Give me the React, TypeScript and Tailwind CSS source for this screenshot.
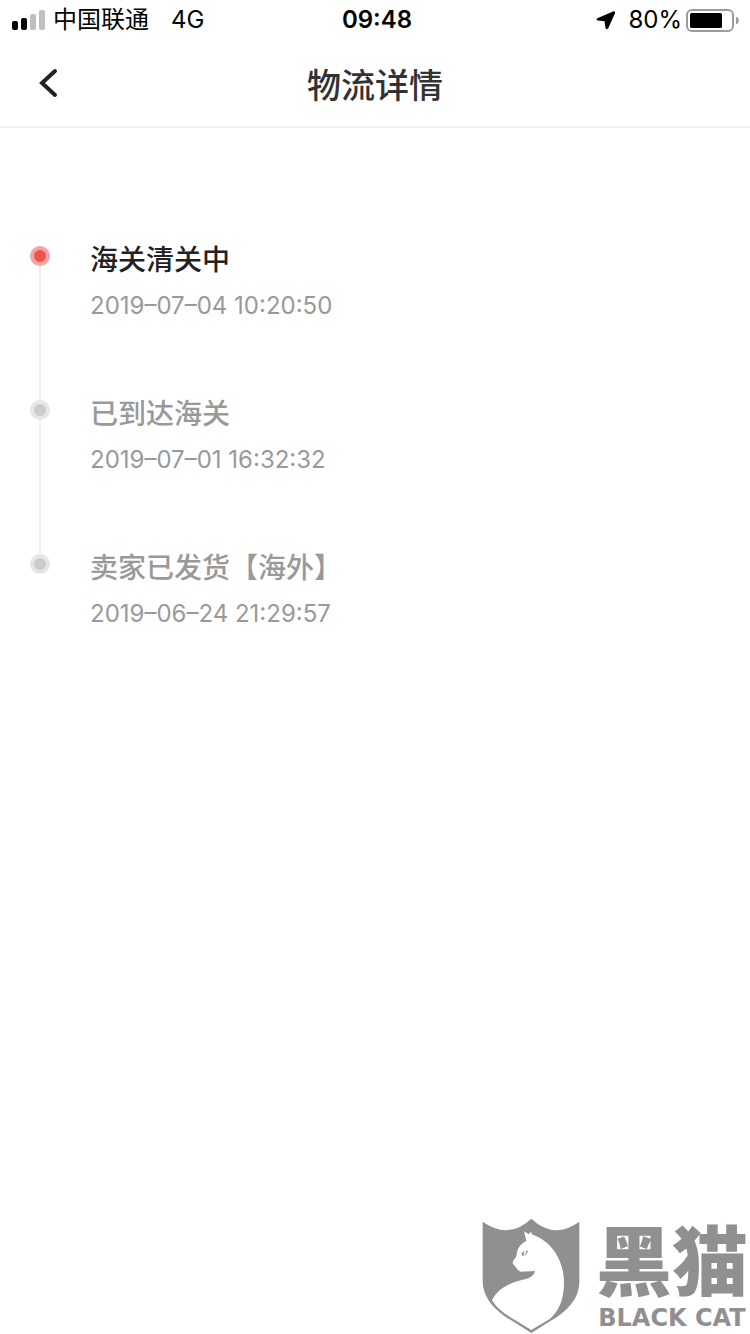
import { clsx } from "clsx";

type Step = {
	title: string;
	time: string;
};

const steps: Step[] = [
	{ title: "海关清关中", time: "2019–07–04 10:20:50" },
	{ title: "已到达海关", time: "2019–07–01 16:32:32" },
	{ title: "卖家已发货【海外】", time: "2019–06–24 21:29:57" },
];

function StatusBar() {
	return (
		<div className="grid grid-cols-3 items-center h-10 pl-3 pr-[10px] text-2xl leading-10 text-black">
			<div className="flex items-center whitespace-nowrap">
				<span className="flex items-end gap-[3px] mr-2">
					<span className="w-[6px] h-[9px] rounded-xs bg-black" />
					<span className="w-[6px] h-3 rounded-xs bg-black" />
					<span className="w-[6px] h-4 rounded-xs bg-[#bfbfbf]" />
					<span className="w-[6px] h-5 rounded-xs bg-[#bfbfbf]" />
				</span>
				<span>中国联通</span>
				<span className="ml-[22px]">4G</span>
			</div>
			<span className="pl-[2px] text-center font-semibold">09:48</span>
			<div className="flex items-center justify-end">
				<svg className="w-5 h-5 mr-3" viewBox="0 0 20 20" aria-hidden="true">
					<path
						d="M17 1.500 L1.400 8.300 Q-.2 9.500 1.500 10.500 L8.600 11.200 L9.500 18.200 Q10.800 20.200 12.200 18.200 L19 3.300 Q19.400 .8 17 1.500Z"
						fill="#000"
					/>
				</svg>
				<span>80%</span>
				<svg className="w-[54px] h-6 ml-1" viewBox="0 0 54 24" aria-hidden="true">
					<rect x="1" y="2" width="46" height="21" rx="5" fill="none" stroke="#9b9b9b" strokeWidth="2" />
					<rect x="4" y="5" width="32" height="15" rx="1.5" fill="#000" />
					<path d="M50 8.500 Q53 10 53 12.500 Q53 15 50 16.500Z" fill="#9b9b9b" />
				</svg>
			</div>
		</div>
	);
}

function Header() {
	return (
		<header className="grid grid-cols-[1fr_auto_1fr] items-center h-22 border-b-2 border-[#f0f0f0] px-9">
			<button type="button" aria-label="返回" className="w-8 h-10">
				<svg className="w-6 h-8" viewBox="0 0 24 32" aria-hidden="true">
					<path d="M19 4 L6 16 L19 28" fill="none" stroke="#222" strokeWidth="4" strokeLinecap="round" />
				</svg>
			</button>
			<h1 className="pt-[6px] text-[34px] leading-10 font-medium text-[#333]">物流详情</h1>
		</header>
	);
}

function TimelineItem({ step, active, last }: { step: Step; active: boolean; last: boolean }) {
	return (
		<li className="flex gap-10">
			<div className="flex flex-col items-center pt-1 -mb-1">
				<span
					className={clsx(
						"flex items-center justify-center size-5 rounded-full",
						active ? "bg-[#f2a3a0]" : "bg-[#e5e5e5]",
					)}
				>
					<span className={clsx("size-3 rounded-full", active ? "bg-[#e95650]" : "bg-[#ccc]")} />
				</span>
				{!last && <span className="w-[2px] flex-1 bg-[#efefef]" />}
			</div>
			<div className={clsx("flex flex-col gap-3", !last && "pb-[74px]")}>
				<h2
					className={clsx("text-[28px] leading-9 font-medium", active ? "text-[#222]" : "text-[#999]")}
				>
					{step.title}
				</h2>
				<time className="text-2xl leading-8 text-[#999]">{step.time}</time>
			</div>
		</li>
	);
}

function Watermark() {
	return (
		<footer className="flex items-end justify-end gap-4 pr-[2px] text-[#918f90]">
			<svg className="w-[98px] h-[116px]" viewBox="32 25 294 348" aria-hidden="true">
				<path
					d="M34 36 Q112 91 180 27 Q248 91 324 36 V218 Q323 277 258 321 Q222 343 180 370 Q138 343 102 321 Q37 277 34 218Z"
					fill="currentColor"
				/>
				<path
					d="M158 65 L173 74 L177 66 L184 75 C235 92 278 145 278 220 C278 270 262 306 235 328 L180 361 L110 318 Q77 298 62 272 C84 229 126 218 161 209 Q188 202 191 184 L148 186 Q139 183 133 172 L124 161 Q122 154 133 144 Q137 137 137 126 Q142 105 165 94Z"
					fill="#fff"
				/>
				<path d="M151 130 Q156 122 170 123 Q168 137 153 138Z" fill="currentColor" />
				<path d="M161 123 L166 127 L159 137 L157 130Z" fill="#fff" />
			</svg>
			<div className="flex flex-col items-center">
				<span className="text-[76px] leading-[80px] font-black">黑猫</span>
				<span className="font-['DejaVu_Sans',sans-serif] text-2xl leading-8 font-bold">BLACK CAT</span>
			</div>
		</footer>
	);
}

export default function App() {
	return (
		<div className="flex flex-col min-h-screen bg-white font-['Inter','Noto_Sans_CJK_SC',sans-serif]">
			<StatusBar />
			<Header />
			<main className="flex-1 px-[30px] pt-[114px]">
				<ol>
					{steps.map((step, i) => (
						<TimelineItem key={step.time} step={step} active={i === 0} last={i === steps.length - 1} />
					))}
				</ol>
			</main>
			<Watermark />
		</div>
	);
}
